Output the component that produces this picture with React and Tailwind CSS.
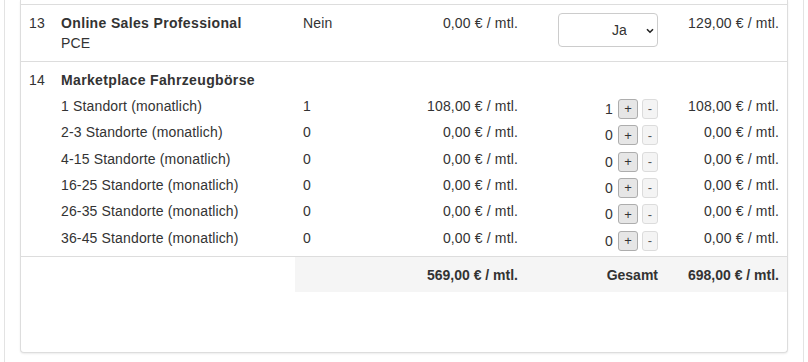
import React from "react";

const GRID = "grid grid-cols-[32px_242px_105px_126px_140px_121px]";

const subs = [
  ["1 Standort (monatlich)", "1", "108,00 € / mtl.", "1", "108,00 € / mtl."],
  ["2-3 Standorte (monatlich)", "0", "0,00 € / mtl.", "0", "0,00 € / mtl."],
  ["4-15 Standorte (monatlich)", "0", "0,00 € / mtl.", "0", "0,00 € / mtl."],
  ["16-25 Standorte (monatlich)", "0", "0,00 € / mtl.", "0", "0,00 € / mtl."],
  ["26-35 Standorte (monatlich)", "0", "0,00 € / mtl.", "0", "0,00 € / mtl."],
  ["36-45 Standorte (monatlich)", "0", "0,00 € / mtl.", "0", "0,00 € / mtl."],
];

function SubRow({ r }) {
  return (
    <div className={`${GRID} h-[26.4px]`}>
      <div />
      <div className="flex items-center px-2">{r[0]}</div>
      <div className="flex items-center px-2">{r[1]}</div>
      <div className="flex items-center justify-end px-2">{r[2]}</div>
      <div className="flex items-center justify-end px-2 pt-[6px]">
        <span className="mr-[5px]">{r[3]}</span>
        <span className="flex h-[20px] w-[20px] items-center justify-center rounded-[3px] border border-[#adadad] bg-[#e6e6e6] text-[13px] leading-none text-[#333]">
          +
        </span>
        <span className="ml-[4px] flex h-[20px] w-[16px] items-center justify-center rounded-[3px] border border-[#dcdcdc] bg-[#f4f4f4] text-[13px] leading-none text-[#555]">
          -
        </span>
      </div>
      <div className="flex items-center justify-end px-2">{r[4]}</div>
    </div>
  );
}

export default function App() {
  return (
    <div className="h-[362px] w-[808px] overflow-hidden bg-white font-['Liberation_Sans',Arial,sans-serif] text-[14px] leading-[20px] tracking-[0.15px] text-[#333]">
      <div className="ml-[4px] h-[362px] w-[800px] border-x border-[#e3e3e3] px-[15px]">
        <div className="w-[768px] rounded-b-[4px] border border-t-0 border-[#dddddd] bg-white shadow-[0_1px_2px_rgba(0,0,0,0.08)]">
          <div className="h-[5px] border-b border-[#dddddd]" />

          {/* Row 13 */}
          <div className={`${GRID} h-[57px] border-b border-[#dddddd]`}>
            <div className="px-2 pt-2">13</div>
            <div className="px-2 pt-2">
              <div className="font-bold tracking-[0.35px]">Online Sales Professional</div>
              <div>PCE</div>
            </div>
            <div className="px-2 pt-2">Nein</div>
            <div className="px-2 pt-2 text-right">0,00 € / mtl.</div>
            <div className="flex justify-end px-2 pt-2">
              <div className="relative h-[34px] w-[100px]">
                <select
                  defaultValue="Ja"
                  className="h-[34px] w-[100px] appearance-none rounded-[4px] border border-[#cccccc] bg-white pr-[30px] text-right text-[14px] text-[#333] [text-align-last:right]"
                >
                  <option>Ja</option>
                  <option>Nein</option>
                </select>
                <svg
                  className="pointer-events-none absolute left-[88px] top-[15px]"
                  width="8"
                  height="6"
                  viewBox="0 0 8 6"
                >
                  <polyline
                    points="1,1.2 4,4.2 7,1.2"
                    fill="none"
                    stroke="#222"
                    strokeWidth="1.6"
                  />
                </svg>
              </div>
            </div>
            <div className="px-2 pt-2 text-right">129,00 € / mtl.</div>
          </div>

          {/* Row 14 */}
          <div className="flex h-[195px] flex-col border-b border-[#dddddd]">
            <div className={`${GRID} h-[30.6px]`}>
              <div className="px-2 pt-2">14</div>
              <div className="px-2 pt-2 font-bold tracking-[0.35px]">Marketplace Fahrzeugbörse</div>
            </div>
            {subs.map((r, i) => (
              <SubRow key={i} r={r} />
            ))}
          </div>

          {/* Totals */}
          <div className={`${GRID} h-[35px] font-bold tracking-normal`}>
            <div />
            <div />
            <div className="bg-[#f5f5f5]" />
            <div className="flex items-center justify-end bg-[#f5f5f5] px-2">569,00 € / mtl.</div>
            <div className="flex items-center justify-end bg-[#f5f5f5] px-2">Gesamt</div>
            <div className="flex items-center justify-end bg-[#f5f5f5] px-2">698,00 € / mtl.</div>
          </div>
          <div className="h-[60px]" />
        </div>
      </div>
    </div>
  );
}
